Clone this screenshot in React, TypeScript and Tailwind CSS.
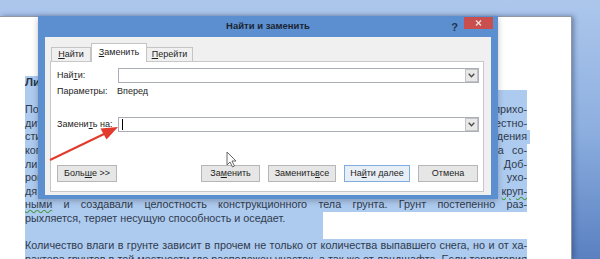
import type { ReactNode } from "react";

type Line = { c: ReactNode; w: string; j?: boolean; bold?: boolean };

const lines: Line[] = [
  { c: "Линзы и пучение грунта", w: "w-[200px]", bold: true },
  { c: "\u00a0", w: "w-[502px]" },
  { c: "Почва весной насыщается влагой, и частицы грунта теряют сцепление, которое прихо-", w: "w-[502px]", j: true },
  { c: "дит в норму только после просыхания. Вода разрушает связи и их совместно-", w: "w-[502px]", j: true },
  { c: "сти, которые защищали основание фундамента от повреждения", w: "w-[505px]", j: true },
  { c: "когда влага замерзает, она расширяется и постепенно разрушает структуру грунта, а со-", w: "w-[502px]", j: true },
  { c: "ли частиц теряют связь и смещаются относительно друг друга. Доб-", w: "w-[502px]", j: true },
  { c: "ровно так же при оттаивании вода начинает ухо-", w: "w-[502px]", j: true },
  {
    c: (
      <>
        дя вниз, увлекая частицы, которые связывали собой{" "}
        <span className="underline decoration-wavy decoration-[#4a9a4a]">круп-</span>
      </>
    ),
    w: "w-[502px]",
    j: true,
  },
  {
    c: (
      <>
        <span className="underline decoration-wavy decoration-[#4a9a4a]">ными</span> и создавали целостность конструкционного тела грунта. Грунт постепенно раз-
      </>
    ),
    w: "w-[502px]",
    j: true,
  },
  { c: "рыхляется, теряет несущую способность и оседает.", w: "w-[298px]" },
  { c: "\u00a0", w: "w-[298px]" },
  { c: "Количество влаги в грунте зависит в прочем не только от количества выпавшего снега, но и от ха-", w: "w-[502px]", j: true },
  { c: "рактера грунтов в той местности где расположен участок, а так же от ландшафта. Если территория", w: "w-[502px]", j: true },
];

function Chevron() {
  return (
    <svg width="7" height="5" viewBox="0 0 7 5">
      <path d="M0.7 0.8 L3.5 3.8 L6.3 0.8" fill="none" stroke="#4a4a4a" strokeWidth="1.3" />
    </svg>
  );
}

function Combo({ caret }: { caret?: boolean }) {
  return (
    <div className="relative flex-1 h-[15px] border border-[#a9aeb7] bg-white">
      {caret && <span className="absolute left-[3px] top-[1px] w-px h-[11px] bg-black" />}
      <div className="absolute right-0 top-0 w-[13px] h-[13px] border border-[#c4c4c4] bg-[#e8e8e8] flex items-center justify-center">
        <Chevron />
      </div>
    </div>
  );
}

function Btn({ children, w, primary }: { children: ReactNode; w: string; primary?: boolean }) {
  return (
    <div
      className={`${w} h-[17px] flex items-center justify-center border ${
        primary ? "border-[#7fadde] bg-[#e7eef6]" : "border-[#b6b6b6] bg-[#e6e6e6]"
      }`}
    >
      {children}
    </div>
  );
}

export default function App() {
  return (
    <div className="relative w-[600px] h-[259px] overflow-hidden bg-gradient-to-b from-[#adc7ec] via-[#8dafe0] to-[#5a80c0]">
      {/* document page */}
      <div className="mt-[16px] w-[572px] h-[243px] bg-white border-t border-r border-[#8f99a6] shadow-[2px_0_5px_rgba(30,50,90,0.45)] pl-[25px] pt-[59px] font-['Liberation_Sans',Arial,sans-serif] text-[10.8px] text-[#2f3b4c]">
        {lines.map((l, i) => (
          <div key={i} className={`${l.w} h-[13.6px] bg-[#adcaef]`}>
            <div
              className={`w-[502px] whitespace-nowrap leading-[13.6px] ${
                l.j ? "text-justify [text-align-last:justify]" : "text-left"
              } ${l.bold ? "font-bold text-[11.5px] text-[#26364e]" : ""}`}
            >
              {l.c}
            </div>
          </div>
        ))}
      </div>

      {/* dialog */}
      <div className="absolute left-[38px] top-[16px] w-[460px] h-[183px] bg-[#5b8fcf] flex flex-col px-[7px] pb-[4px] shadow-[0_2px_6px_rgba(0,0,0,0.25)] font-['Liberation_Sans',Arial,sans-serif] text-[9px] text-[#1e1e1e]">
        <div className="relative h-[21px] flex items-center justify-center">
          <span className="text-[9.5px] font-bold text-[#1c2533]">Найти и заменить</span>
          <span className="absolute right-[33px] top-[3px] text-[11px] font-bold text-[#22344d]">?</span>
          <div className="absolute right-[-2px] top-[1px] w-[29px] h-[12px] bg-[#c94f4f] flex items-center justify-center">
            <svg width="7" height="6" viewBox="0 0 7 6">
              <path d="M1 0.5 L6 5.5 M6 0.5 L1 5.5" stroke="#f3dede" strokeWidth="1.4" />
            </svg>
          </div>
        </div>

        <div className="flex-1 bg-[#f0f0f0] pt-[6px] pl-[5px] pr-[7px] pb-[3px] flex flex-col">
          {/* tabs */}
          <div className="h-[18px] flex items-end pl-[1px] relative z-10">
            <div className="w-[40px] h-[14px] border border-b-0 border-[#c4c4c4] bg-[#f0f0f0] flex items-center justify-center">
              <span><u>Н</u>айти</span>
            </div>
            <div className="w-[56px] h-[19px] -mb-px border border-b-0 border-[#c4c4c4] bg-white flex items-center justify-center">
              <span><u>З</u>аменить</span>
            </div>
            <div className="w-[46px] h-[14px] border border-b-0 border-l-0 border-[#c4c4c4] bg-[#f0f0f0] flex items-center justify-center">
              <span><u>П</u>ерейти</span>
            </div>
          </div>

          {/* panel */}
          <div className="flex-1 bg-white border border-[#c8c8c8] pt-[6px] pl-[6px] pr-[4px] flex flex-col">
            <div className="flex items-center h-[15px]">
              <span className="w-[61px]">Най<u>т</u>и:</span>
              <Combo />
            </div>
            <div className="flex items-center h-[13px] mt-[2px]">
              <span className="w-[60px]">Параметры:</span>
              <span>Вперед</span>
            </div>
            <div className="flex items-center h-[15px] mt-[19px]">
              <span className="w-[61px] whitespace-nowrap">Замени<u>т</u>ь на:</span>
              <Combo caret />
            </div>
            <div className="flex items-center justify-between mt-[33px] pr-[1px]">
              <Btn w="w-[60px]">Боль<u>ш</u>е &gt;&gt;</Btn>
              <div className="flex gap-2">
                <Btn w="w-[59px]">За<u>м</u>енить</Btn>
                <Btn w="w-[68px]">Заменить <u>в</u>се</Btn>
                <Btn w="w-[66px]" primary>На<u>й</u>ти далее</Btn>
                <Btn w="w-[60px]">Отмена</Btn>
              </div>
            </div>
          </div>
        </div>
      </div>

      {/* red arrow and mouse pointer */}
      <svg className="absolute inset-0 pointer-events-none" width="600" height="259" viewBox="0 0 600 259">
        <line x1="50" y1="160" x2="104" y2="134" stroke="#e23a2c" strokeWidth="2" />
        <polygon points="118,127 106.5,139.5 100.5,128.5" fill="#e23a2c" />
        <path
          d="M227 152 L227 165 L230 162 L232.5 167 L234.5 166 L232 161 L236 161 Z"
          fill="#fbfbfb"
          stroke="#5a5a5a"
          strokeWidth="0.9"
        />
      </svg>
    </div>
  );
}
